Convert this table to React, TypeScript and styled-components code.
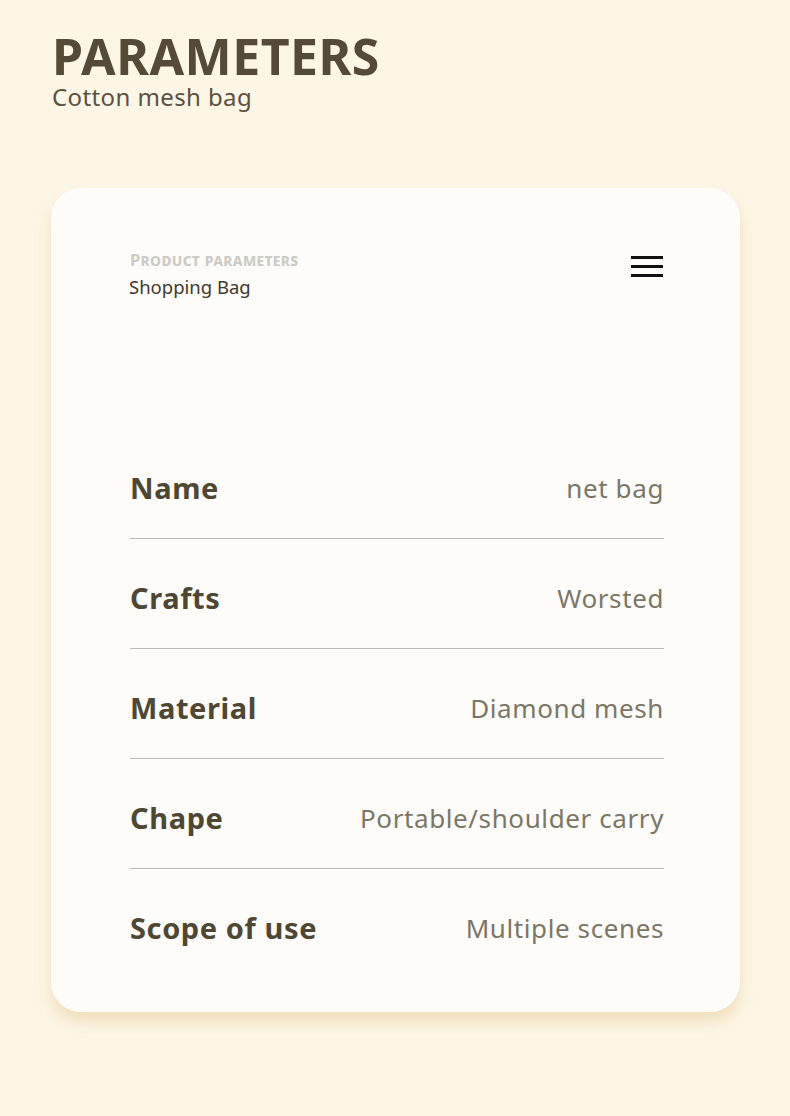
import React from "react";
import styled, { createGlobalStyle } from "styled-components";

const GlobalStyle = createGlobalStyle`
  html, body {
    margin: 0;
    padding: 0;
    background: #fdf6e5;
  }
  body {
    font-family: "Noto Sans", "Open Sans", sans-serif;
  }
`;

const Page = styled.div`
  width: 790px;
  height: 1116px;
  box-sizing: border-box;
  padding: 32px 50px 0 51px;
  background: #fdf6e5;
`;

const Title = styled.h1`
  margin: 0 0 0 1px;
  font-size: 50px;
  line-height: 48px;
  font-weight: 700;
  letter-spacing: 0.5px;
  color: #544a37;
`;

const Subtitle = styled.div`
  margin: 2px 0 0 1px;
  font-size: 24px;
  line-height: 30px;
  letter-spacing: 0.4px;
  color: #5a5140;
`;

const Card = styled.div`
  margin-top: 76px;
  width: 689px;
  height: 824px;
  box-sizing: border-box;
  padding: 60px 76px 0 78px;
  background: #fefcf8;
  border-radius: 30px;
  box-shadow: 0 10px 14px rgba(232, 205, 160, 0.55);
`;

const CardHead = styled.div`
  display: flex;
  justify-content: space-between;
  align-items: flex-start;
`;

const HeadText = styled.div`
  display: flex;
  flex-direction: column;
`;

const Overline = styled.div`
  margin-left: 1px;
  font-size: 16.5px;
  line-height: 24px;
  font-weight: 700;
  font-variant: small-caps;
  letter-spacing: 0.3px;
  color: #cdcbc6;
`;

const HeadName = styled.div`
  font-size: 18.5px;
  line-height: 30px;
  color: #3f3a2f;
`;

const Menu = styled.div`
  margin-top: 8px;
  margin-right: 1px;
  width: 32px;
  display: flex;
  flex-direction: column;
  gap: 6px;
  & > span {
    display: block;
    height: 3px;
    background: #111;
  }
`;

const List = styled.div`
  margin-top: 127px;
  margin-left: 1px;
  display: flex;
  flex-direction: column;
`;

const Row = styled.div<{ $last?: boolean }>`
  display: flex;
  justify-content: space-between;
  align-items: center;
  height: 101px;
  padding-top: 8px;
  border-bottom: ${(p) => (p.$last ? "none" : "1px solid #bdbab3")};
`;

const Label = styled.div`
  font-size: 29px;
  font-weight: 700;
  letter-spacing: 0.6px;
  color: #4e4734;
`;

const Value = styled.div`
  font-size: 26px;
  letter-spacing: 0.6px;
  color: #7b7767;
`;

const rows = [
  ["Name", "net bag"],
  ["Crafts", "Worsted"],
  ["Material", "Diamond mesh"],
  ["Chape", "Portable/shoulder carry"],
  ["Scope of use", "Multiple scenes"],
];

export default function App() {
  return (
    <>
      <GlobalStyle />
      <Page>
        <Title>PARAMETERS</Title>
        <Subtitle>Cotton mesh bag</Subtitle>
        <Card>
          <CardHead>
            <HeadText>
              <Overline>Product parameters</Overline>
              <HeadName>Shopping Bag</HeadName>
            </HeadText>
            <Menu>
              <span />
              <span />
              <span />
            </Menu>
          </CardHead>
          <List>
            {rows.map(([k, v], i) => (
              <Row key={k} $last={i === rows.length - 1}>
                <Label>{k}</Label>
                <Value>{v}</Value>
              </Row>
            ))}
          </List>
        </Card>
      </Page>
    </>
  );
}
